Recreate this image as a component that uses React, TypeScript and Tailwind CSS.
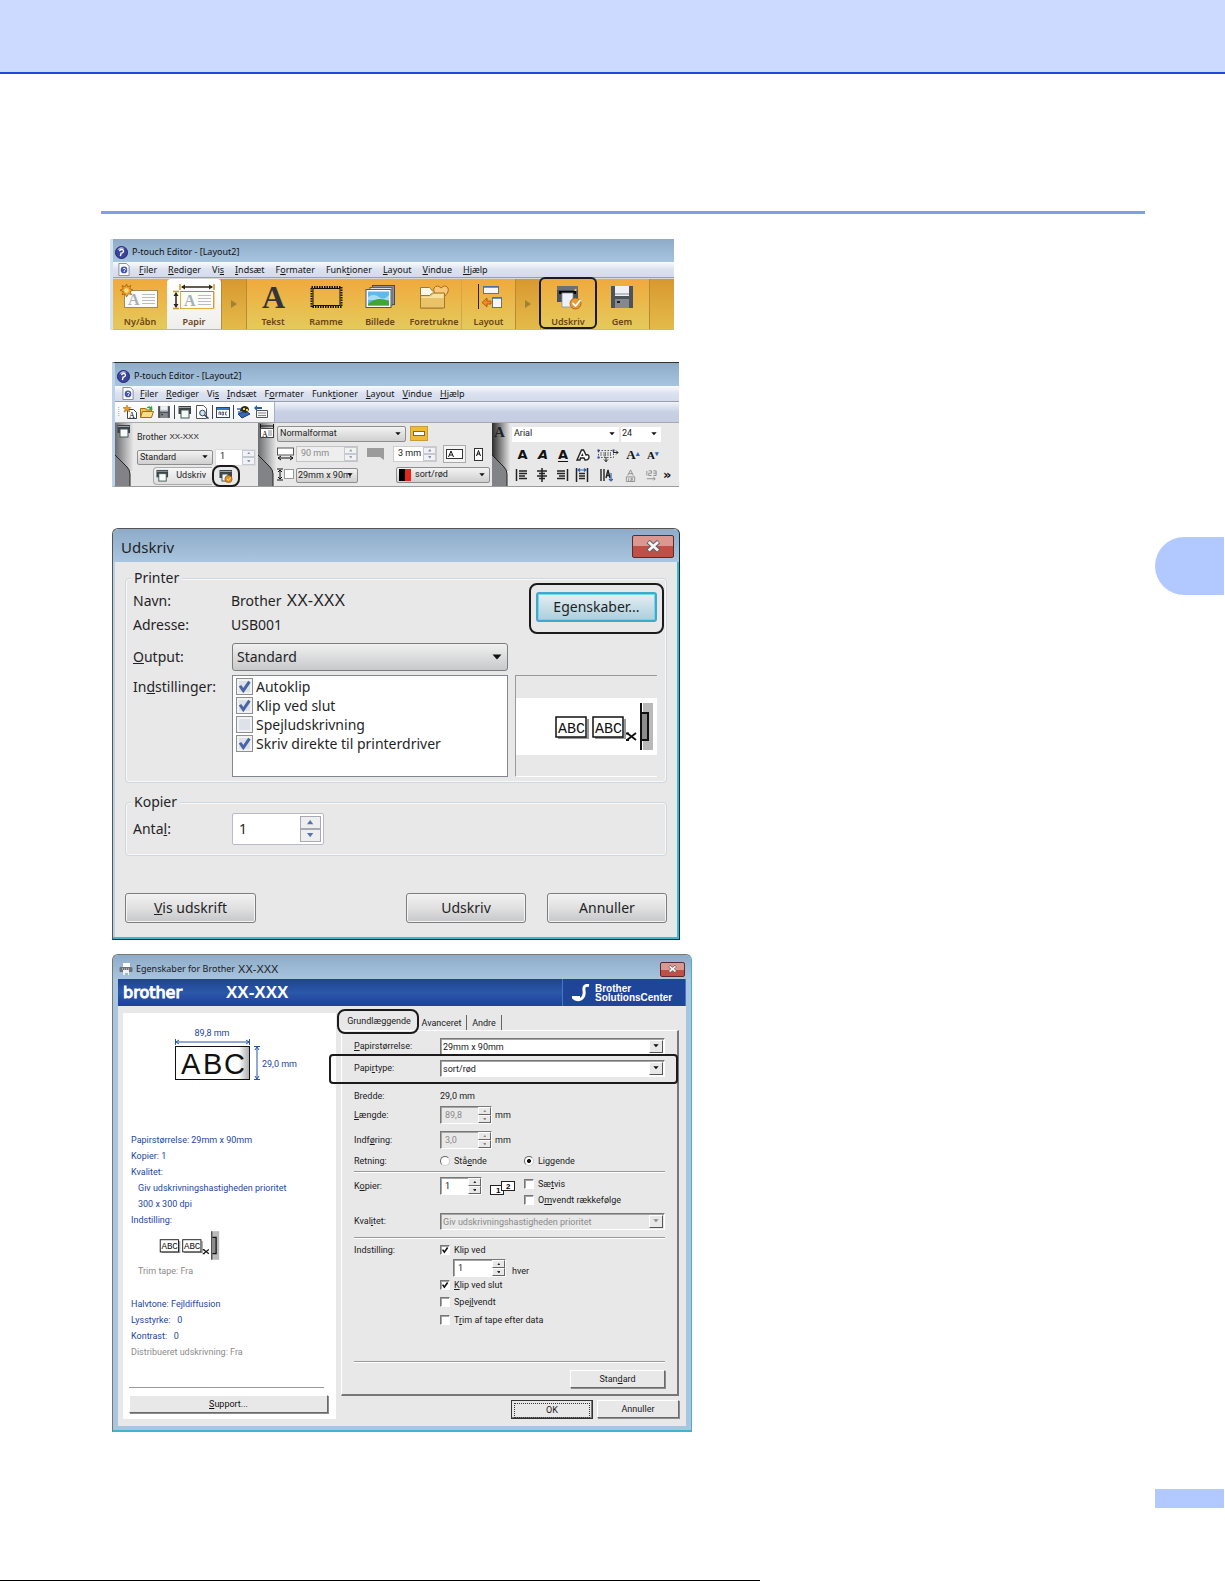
import React, { useState } from 'react';
import clsx from 'clsx';

const ui = "font-['Noto_Sans','Open_Sans',sans-serif]";
const narrow = "font-['Roboto','Noto_Sans',sans-serif]";

// "&Filer" -> F underlined, the rest plain
const Accel = ({ text }: { text: string }) => {
  const i = text.indexOf('&');
  if (i < 0) return <>{text}</>;
  return (
    <>
      {text.slice(0, i)}
      <u className="underline-offset-1">{text[i + 1]}</u>
      {text.slice(i + 2)}
    </>
  );
};

const Callout = ({ className }: { className: string }) => (
  <span className={clsx('absolute pointer-events-none border-2 border-[#1c1a1d]', className)} />
);

/* ---------- form controls ---------- */

interface SelectProps {
  label: string;
  options: string[];
  className: string;
  arrow?: string;
  disabled?: boolean;
  children?: React.ReactNode;
  pad?: string;
}

const Select = ({ label, options, className, arrow, disabled, children, pad = 'pl-1' }: SelectProps) => (
  <span className={clsx('relative flex items-center', className)}>
    {children}
    <select
      aria-label={label}
      disabled={disabled}
      className={clsx('appearance-none w-full h-full bg-transparent outline-none truncate', pad, disabled && 'text-[#8a8a8a]')}
    >
      {options.map((o) => (
        <option key={o}>{o}</option>
      ))}
    </select>
    <span className={clsx('absolute pointer-events-none flex items-center justify-center', arrow || 'right-1 inset-y-0 w-[6px]')}>
      <svg viewBox="0 0 10 6" className="w-full max-w-[10px] min-w-[6px]">
        <path d="M0.5 0.5h9L5 5.5z" fill={disabled ? '#8a8a8a' : '#111'} />
      </svg>
    </span>
  </span>
);

interface SpinnerProps {
  label: string;
  initial: string;
  className: string;
  btn: string;
  disabled?: boolean;
  color?: string;
}

const Spinner = ({ label, initial, className, btn, disabled, color = '#222' }: SpinnerProps) => {
  const [value, setValue] = useState(initial);
  const step = (d: number) => setValue((v) => (/^\d+$/.test(v) ? String(Math.max(1, Number(v) + d)) : v));
  return (
    <span className={clsx('flex', className)}>
      <input
        aria-label={label}
        value={value}
        disabled={disabled}
        onChange={(e) => setValue(e.target.value)}
        className={clsx('flex-1 min-w-0 bg-transparent outline-none pl-1', disabled && 'text-[#8a8a8a]')}
      />
      <span className="flex flex-col">
        <button aria-label={`${label} op`} disabled={disabled} onClick={() => step(1)} className={clsx('flex-1 flex items-center justify-center', btn)}>
          <svg viewBox="0 0 6 4" className="w-1/3"><path d="M0 4h6L3 0z" fill={color} /></svg>
        </button>
        <button aria-label={`${label} ned`} disabled={disabled} onClick={() => step(-1)} className={clsx('flex-1 flex items-center justify-center', btn)}>
          <svg viewBox="0 0 6 4" className="w-1/3"><path d="M0 0h6L3 4z" fill={color} /></svg>
        </button>
      </span>
    </span>
  );
};

const Check = ({ text, on, className, box, mark }: { text: string; on?: boolean; className?: string; box: string; mark: string }) => (
  <label className={clsx('flex items-center', className)}>
    <span className={clsx('relative flex shrink-0', box)}>
      <input type="checkbox" defaultChecked={on} className="peer appearance-none absolute inset-0" />
      <svg viewBox="0 0 10 10" className="hidden peer-checked:block w-full h-full pointer-events-none relative">
        <path d="M2 4.5l2.2 3.2L8.3 1.8" fill="none" stroke={mark} strokeWidth="2" />
      </svg>
    </span>
    <span><Accel text={text} /></span>
  </label>
);

/* ---------- icons ---------- */

const AppIcon = ({ className = 'w-[13px] h-[13px]' }) => (
  <svg viewBox="0 0 14 14" className={className}>
    <circle cx="7" cy="7" r="6.5" fill="#3a449c" stroke="#1d2466" />
    <path d="M2.5 4.5A5 5 0 0 1 10.5 2.6Q7 2.4 2.5 4.5z" fill="#a9b4ea" />
    <path d="M4.8 5.5Q5.5 3.5 7.8 3.8Q10 4.6 8.6 6.7Q7.5 7.8 6.6 7.6L5.8 11" fill="none" stroke="#fff" strokeWidth="1.5" />
  </svg>
);

const DocIcon = () => (
  <svg viewBox="0 0 12 14" className="w-3 h-[13px] -mr-[2px]">
    <path d="M0.5 0.5h8l3 3v10h-11z" fill="#fdfdfd" stroke="#7d8596" />
    <circle cx="6" cy="7.5" r="3.6" fill="#4455b0" />
    <path d="M4.8 6.5q1-1.5 2.4-.5t-.6 2l-.6 1.7" fill="none" stroke="#fff" />
  </svg>
);

const Card = ({ x, y }: { x: number; y: number }) => (
  <g transform={`translate(${x} ${y})`}>
    <rect x="0.5" y="0.5" width="33" height="17" fill="#fbfbf8" stroke="#a28b56" />
    <path d="M18 4.5h13M18 7.5h13M18 10.5h13M18 13.5h13" stroke="#b9bcc4" />
    <text x="4" y="15" fontSize="16" fontWeight="bold" fontFamily="Liberation Serif" fill="#a9afb9">A</text>
  </g>
);

const NewIcon = () => (
  <svg viewBox="0 0 42 26" className="w-[42px] h-[26px]">
    <Card x={5} y={6} />
    <path d="M7.5 0l1.3 3 3-1.5-1 3.2 3.2 1.300-3 1.700 1.500 2.800-3.200-.7L7.500 13l-1.400-3.200-3.100.9 1.400-3L1 6.300l3.200-1.600L3 1.600l3.100 1.300z" fill="#f3a52c" stroke="#9f5f14" strokeWidth="0.8" />
    <circle cx="7.5" cy="6.5" r="2.3" fill="#ffdd7d" />
  </svg>
);

const PaperIcon = () => (
  <svg viewBox="0 0 42 26" className="w-[42px] h-[26px]">
    <Card x={7} y={7} />
    <path d="M7 0v6M41 0v6M0 7.5h6M0 24.5h6" stroke="#c99a24" strokeWidth="1.5" />
    <path d="M7.5 7.5v17M41 7.5v17h-33" fill="none" stroke="#e2b03a" />
    <path d="M9 3h30M3 9v14" stroke="#2f2713" strokeWidth="1.5" />
    <path d="M8 3l4-2.5v5zM40 3l-4-2.5v5zM3 8L.5 12h5zM3 24l-2.500-4h5z" fill="#2f2713" />
  </svg>
);

const TextIcon = () => (
  <svg viewBox="0 0 42 26" className="w-[42px] h-[26px] overflow-visible">
    <text x="10" y="24" fontSize="32" fontWeight="bold" fontFamily="Liberation Serif" fill="#34343c">A</text>
  </svg>
);

const FrameIcon = () => (
  <svg viewBox="0 0 42 26" className="w-[42px] h-[26px]">
    <rect x="6.5" y="3" width="30" height="20" fill="none" stroke="#17120a" strokeWidth="2" strokeDasharray="1.5 1" />
    <rect x="8" y="4.5" width="27" height="17" fill="none" stroke="#17120a" />
  </svg>
);

const PictureIcon = () => (
  <svg viewBox="0 0 42 26" className="w-[42px] h-[26px]">
    <rect x="13.5" y="1.5" width="22" height="19" fill="#8b9098" stroke="#464a52" />
    <rect x="11" y="3.5" width="22" height="18" fill="#d9dce0" stroke="#5d626b" />
    <rect x="7" y="5.5" width="25" height="18" fill="#fff" stroke="#556" />
    <rect x="9" y="7.5" width="21" height="14" fill="#63b8ea" />
    <path d="M9 13q6-4 11 0t10-2v5H9z" fill="#a6dcf5" />
    <path d="M9 20q9-8 21-3v4.5H9z" fill="#3fa535" />
  </svg>
);

const FavIcon = () => (
  <svg viewBox="0 0 42 26" className="w-[42px] h-[26px]">
    <path d="M7.5 24V3.5h9l3 3.500h10V24z" fill="#fdf8e8" stroke="#9a7a34" />
    <path d="M28 15q-9-6-7-11 3-4 7 0 4-4 7 0 2 5-7 11z" fill="#f7c879" stroke="#a86a1b" />
    <path d="M7.5 24V11.5h9l3-2.500h12V24z" fill="#eac368" stroke="#a07a28" />
    <path d="M8.5 12.5h9l3-2.500h10v4H8.500z" fill="#f6e1a0" />
  </svg>
);

const LayoutIcon = () => (
  <svg viewBox="0 0 42 26" className="w-[42px] h-[26px]">
    <path d="M10.5 0v25" stroke="#2b2415" />
    <rect x="15.5" y="2.5" width="15" height="7" fill="#f4f6f8" stroke="#6c7078" />
    <path d="M15.5 3h15" stroke="#3c74b8" strokeWidth="1.5" />
    <rect x="24.5" y="13.5" width="9" height="10" fill="#f4f6f8" stroke="#6c7078" />
    <path d="M24.5 14h9" stroke="#3c74b8" strokeWidth="1.5" />
    <path d="M14 18.5l5-4.500v3h4v3h-4v3z" fill="#f08a24" stroke="#a24e0e" strokeWidth="0.8" />
  </svg>
);

const PrintIcon = () => (
  <svg viewBox="0 0 42 26" className="w-[42px] h-[26px]">
    <rect x="10" y="2" width="21" height="16" fill="#4b4f57" />
    <rect x="10" y="2" width="21" height="4" fill="#6b7079" />
    <path d="M12 8.5h17" stroke="#050505" strokeWidth="3" />
    <rect x="27.5" y="5" width="2" height="2" fill="#f7c62c" />
    <rect x="15" y="9" width="11" height="14" fill="#edf2f8" stroke="#8b93a0" strokeWidth="0.8" />
    <circle cx="28.5" cy="19.5" r="5.5" fill="#e89a34" stroke="#9d5a11" strokeWidth="0.8" />
    <path d="M25.5 19l3 3 5-6" fill="none" stroke="#fff" strokeWidth="1.8" />
  </svg>
);

const SaveIcon = ({ className = 'w-[42px] h-[26px]', box = '0 0 42 26' }) => (
  <svg viewBox={box} className={className}>
    <path d="M10 2h22v22H10z" fill="#4e525b" />
    <rect x="14" y="2" width="14" height="10" fill="#eef0f3" />
    <path d="M14 10h14" stroke="#b8bdc6" strokeWidth="2" />
    <rect x="14" y="15" width="14" height="9" fill="#85898f" />
    <rect x="16" y="17" width="3" height="2" fill="#1d1f24" />
  </svg>
);

const SmallPrinter = ({ className = 'w-[14px] h-[14px]', gold = false }) => (
  <svg viewBox="0 0 14 14" className={className}>
    <rect x="0.5" y="1" width="12.5" height="8" fill="#3c4248" />
    <path d="M1 2.5h11.5" stroke="#9aa2a8" />
    {gold ? (
      <>
        <rect x="3" y="5" width="6" height="7" fill="#f7faf9" stroke="#41594f" />
        <circle cx="9.5" cy="10" r="3.6" fill="#e09028" stroke="#8a4d0c" strokeWidth="0.7" />
        <path d="M7.8 9.8l1.5 1.600 2.400-3" fill="none" stroke="#f7d9a8" />
      </>
    ) : (
      <rect x="3" y="5" width="8" height="8" fill="#f7faf9" stroke="#41594f" />
    )}
  </svg>
);

/* boxes of ABC labels leaving the cutter */
const TapeDrawing = ({ className }: { className: string }) => (
  <svg viewBox="0 0 100 51" className={className}>
    {[0, 37].map((x) => (
      <g key={x}>
        <path d={`M${x + 3} 37h30V18`} fill="none" stroke="#999" strokeWidth="2" />
        <rect x={x + 1} y="16" width="30" height="20" fill="#fff" stroke="#111" strokeWidth="1.5" />
        <text x={x + 3} y="32" fontSize="15" fontFamily="Liberation Mono" fill="#111">ABC</text>
      </g>
    ))}
    <path d="M72 32l9 7M72 39l9-7" stroke="#111" strokeWidth="1.8" />
    <path d="M71 32.5h3M71 39h3" stroke="#111" strokeWidth="2" />
    <rect x="88" y="2" width="10" height="47" fill="#b9b9b9" />
    <path d="M86 2v47" stroke="#111" strokeWidth="2" />
    <path d="M87 12h6v27h-6" fill="#8c8c8c" stroke="#111" strokeWidth="2" />
  </svg>
);

/* ---------- editor windows ---------- */

const menu = ['&Filer', '&Rediger', 'Vi&s', '&Indsæt', 'F&ormater', 'Funk&tioner', '&Layout', '&Vindue', '&Hjælp'];

const TitleBar = () => (
  <div className="h-[23px] flex items-center gap-1 pl-[2px] pt-[3px] bg-linear-to-b from-[#8eabc8] to-[#a7c4df] text-[#111]">
    <AppIcon />
    <span className="text-[9px] leading-4">P-touch Editor - [Layout2]</span>
  </div>
);

const MenuBar = ({ className }: { className: string }) => (
  <nav className={clsx('h-4 flex items-center text-[9px] leading-4 bg-linear-to-b from-[#fafbfd] via-[#dbe1ef] to-[#d3dbeb] border-b border-[#9a9fa8] text-[#151515]', className)}>
    <DocIcon />
    {menu.map((m) => (
      <a key={m} href="#" onClick={(e) => e.preventDefault()}><Accel text={m} /></a>
    ))}
  </nav>
);

const ToolButton = ({ icon, label, className }: { icon: React.ReactNode; label: string; className?: string }) => (
  <button className={clsx('relative flex flex-col items-center justify-between pt-[5px] h-full', className)}>
    {icon}
    <span className="text-[9px] leading-[15px] font-semibold text-[#6b4413]">{label}</span>
  </button>
);

const Arrow = () => (
  <span className="w-6 flex items-center justify-center">
    <svg viewBox="0 0 6 8" className="w-[6px] h-2"><path d="M0 0l6 4-6 4z" fill="#a08235" /></svg>
  </span>
);

const ExpressWindow = () => (
  <section className={clsx('ml-[110px] max-w-[564px] border-l-3 border-[#d5e3f0]', ui)}>
    <TitleBar />
    <MenuBar className="gap-[11px] pl-[5px]" />
    <div className="h-[52px] border-b border-[#b7b7b7] border-t border-t-[#d8d8d8] bg-linear-to-b from-[#d8982f] to-[#e3bb4a] flex">
      <div className="flex bg-linear-to-b from-[#f0a93c] to-[#e3ca5b] border-r border-[#b98a31]">
        <ToolButton icon={<NewIcon />} label="Ny/åbn" className="w-[54px]" />
        <ToolButton icon={<PaperIcon />} label="Papir" className="w-[54px] bg-linear-to-b from-white to-[#eeeeec] rounded-t-sm" />
      </div>
      <Arrow />
      <div className="flex bg-linear-to-b from-[#f0a93c] to-[#e3ca5b] border-x border-[#b98a31]">
        <ToolButton icon={<TextIcon />} label="Tekst" className="w-[52px]" />
        <ToolButton icon={<FrameIcon />} label="Ramme" className="w-[54px]" />
        <ToolButton icon={<PictureIcon />} label="Billede" className="w-[54px]" />
        <ToolButton icon={<FavIcon />} label="Foretrukne" className="w-[54px]" />
        <ToolButton icon={<LayoutIcon />} label="Layout" className="w-[54px] border-l border-[#d3a648]" />
      </div>
      <Arrow />
      <div className="flex bg-linear-to-b from-[#f0a93c] to-[#e3ca5b] border-x border-[#b98a31]">
        <span className="relative">
          <ToolButton icon={<PrintIcon />} label="Udskriv" className="w-[54px]" />
          <Callout className="-inset-x-[2px] -top-[2px] bottom-0 rounded-md" />
        </span>
        <ToolButton icon={<SaveIcon />} label="Gem" className="w-[54px]" />
      </div>
    </div>
  </section>
);

const SideTab = ({ children, from = '#6a6b6e' }: { children: React.ReactNode; from?: string }) => (
  <div className="relative w-[18px] shrink-0 h-full">
    <svg viewBox="0 0 18 63" className="absolute inset-0 w-full h-full" preserveAspectRatio="none">
      <defs>
        <linearGradient id={`tab${from.slice(1)}`} x1="0" x2="1">
          <stop offset="0" stopColor={from} />
          <stop offset="1" stopColor="#e4e4e4" />
        </linearGradient>
      </defs>
      <path d="M0 0h18v48h-3L0 33z" fill={`url(#tab${from.slice(1)})`} />
      <path d="M0 32l12 12q3 3 3 7v12H0z" fill="#828387" />
      <path d="M0 32l12 12q3 3 3 7v12" fill="none" stroke="#222" />
    </svg>
    <span className="relative flex items-start pt-px pl-[2px]">{children}</span>
  </div>
);

const winSelect = 'border border-[#8e8e8e] rounded-[2px] bg-linear-to-b from-[#f3f3f3] to-[#cfcfcf]';
const tinyBtn = 'w-[13px] border border-[#c5c9d3] bg-[#f2f2f2]';

const formatGlyphs = (
  <div className="flex items-center h-5 text-[#111] leading-5">
    <button className="w-[21px] font-['DejaVu_Sans'] font-bold text-[13px]">A</button>
    <button className="w-5 font-['DejaVu_Sans'] font-bold italic text-[13px]">A</button>
    <button className="w-5 font-['DejaVu_Sans'] font-semibold text-[13px] underline underline-offset-2">A</button>
    <button className="w-5 flex justify-center" aria-label="Kontur">
      <svg viewBox="0 0 14 14" className="w-[14px] h-[14px]">
        <path d="M1 12L5.500 2h2L10 7q3-1 3 2t-4 3l-1-2H4.500L4 12z" fill="#fff" stroke="#222" strokeWidth="1.4" />
        <path d="M5 8l1.5-3L7.500 8z" fill="#222" />
      </svg>
    </button>
    <button className="w-[30px] flex justify-center" aria-label="Tilpas tekst">
      <svg viewBox="0 0 22 16" className="w-[22px] h-4">
        <path d="M1.5 3.500h15v7h-15z" fill="none" stroke="#555" strokeDasharray="1.500 1.500" />
        <path d="M4 5v4M7 5v4h1.500V5M11 5v4M13.500 5v4" stroke="#777" fill="none" />
        <path d="M16 5.500h5M19 3.500l2 2-2 2M9 10v5M7 12.500l2 2 2-2" stroke="#222" fill="none" />
        <path d="M0.500 2.500h2v2h-2zM15.500 2.500h2v2h-2zM0.500 9.500h2v2h-2z" fill="#2b3a8c" />
      </svg>
    </button>
    <button className="w-[20px] font-['Liberation_Serif'] font-bold text-[13px]">A<sup className="text-[#2f62b5] text-[7px]">▴</sup></button>
    <button className="w-[20px] font-['Liberation_Serif'] font-bold text-[11px]">A<sup className="text-[#2f62b5] text-[7px]">▾</sup></button>
  </div>
);

// the vertical margin line and the text lines of each paragraph icon
const alignPaths = [
  'M1.5 1v12M4 3h8M4 5.500h8M4 8h6M4 10.500h8',
  'M7 0v14M2 3h10M4 5.500h6M2 8h10M4 10.500h6',
  'M12.5 1v12M2 3h8M2 5.500h8M4 8h6M2 10.500h8',
  'M1.5 0v14M12.500 0v14M4 5.500h6M4 8h6M4 10.500h6',
];

const alignGlyphs = (
  <div className="flex items-center h-5">
    {alignPaths.map((d, i) => (
      <button key={d} aria-label="Justering" className="w-5 flex justify-center">
        <svg viewBox="0 0 14 14" className="w-[14px] h-[14px]">
          <path d={d} stroke="#222" strokeWidth="1.5" />
          {i === 3 && <path d="M3 2h8M5 .5L3 2l2 1.500M9 .5L11 2 9 3.500" fill="none" stroke="#2f62b5" strokeWidth="1.2" />}
        </svg>
      </button>
    ))}
    <button aria-label="Lodret" className="w-[28px] flex justify-center">
      <svg viewBox="0 0 14 14" className="w-[14px] h-[14px]">
        <path d="M2 1v12M5 1v12M7 10L9 2l2 8M8 7.500h2" fill="none" stroke="#222" strokeWidth="1.4" />
        <path d="M12 5v8M10 11l2 2 2-2" fill="none" stroke="#2f62b5" strokeWidth="1.2" />
      </svg>
    </button>
    <button aria-label="Nummerering" className="w-[20px] flex justify-center">
      <svg viewBox="0 0 14 14" className="w-[13px] h-[13px]">
        <path d="M4 7l3-6 3 6M5 5h4M2.500 8.500h9v5h-9zM5 10v3M7 10h2v1.500H7.500V13H10" fill="none" stroke="#8c8c8c" />
      </svg>
    </button>
    <button aria-label="Tal" className="w-[22px] flex justify-center">
      <svg viewBox="0 0 14 14" className="w-[13px] h-[13px]">
        <path d="M2 2v5M4 2h3v2.500H4V7h3M9 2h3v5H9M9 4.500h3M2 10.500h9M9 9l2 1.500L9 12" fill="none" stroke="#8c8c8c" />
      </svg>
    </button>
    <button className="text-[13px] leading-4 font-['DejaVu_Sans'] font-bold text-[#111] pl-px">»</button>
  </div>
);

const ProWindow = () => (
  <section className={clsx('ml-[112px] max-w-[567px] border-t border-t-[#333] border-l-3 border-l-[#bcd3e8] border-b border-b-[#9c9c9c]', ui)}>
    <TitleBar />
    <MenuBar className="gap-2 pl-[7px]" />
    <div className="h-[20px] flex bg-linear-to-b from-[#f0f3f9] to-[#c4cde2] via-[#c8d0e4]">
      <div className="w-[160px] h-full bg-linear-to-b from-white to-[#f0f1f4] border-r border-[#a9afba] flex items-center pl-[3px] gap-[3px]">
        <svg viewBox="0 0 3 14" className="w-[2px] h-[14px]"><path d="M1 0v14" stroke="#aaa" strokeWidth="2" strokeDasharray="1 2" /></svg>
        <button aria-label="Ny"><svg viewBox="0 0 14 14" className="w-[14px] h-[14px] block">
          <path d="M4.5 4.500h6l3 3v6h-9z" fill="#fff" stroke="#444" />
          <text x="6" y="13" fontSize="8" fontFamily="Liberation Serif">A</text>
          <path d="M4 0l1 2.500h3L6 4.500 7 7 4 5.500 1 7l1-2.500L0 2.500h3z" fill="#e99a2c" stroke="#a2600e" strokeWidth="0.5" />
        </svg></button>
        <button aria-label="Åbn"><svg viewBox="0 0 14 14" className="w-[14px] h-[14px] block">
          <path d="M0.5 12.500v-9h5l1 1.500h5v7z" fill="#f2c14c" stroke="#a3701a" />
          <path d="M0.5 12.500l2-6h11l-2 6z" fill="#f9dc86" stroke="#a3701a" />
          <path d="M6 4q2-4 5-2l1-1.500.5 4.500-4-.5 1.300-1.200Q8 2.500 6 4z" fill="#37a13c" />
        </svg></button>
        <button aria-label="Gem"><SaveIcon box="8 0 26 26" className="w-[14px] h-[14px] block" /></button>
        <span className="w-px h-[14px] bg-[#444]" />
        <button aria-label="Udskriv"><SmallPrinter className="w-[14px] h-[14px] block" /></button>
        <button aria-label="Vis udskrift"><svg viewBox="0 0 14 14" className="w-[14px] h-[14px] block">
          <path d="M1.5 0.500h7l3 3v10h-10z" fill="#fff" stroke="#555" />
          <circle cx="7.5" cy="8" r="2.8" fill="#cfe6f7" stroke="#345" />
          <path d="M9.5 10l4 3.500" stroke="#345" strokeWidth="1.5" />
        </svg></button>
        <span className="w-px h-[14px] bg-[#444]" />
        <button aria-label="Egenskaber"><svg viewBox="0 0 14 14" className="w-[14px] h-[14px] block">
          <rect x="0.5" y="2.5" width="13" height="10" fill="#fff" stroke="#345" />
          <path d="M1 4h12" stroke="#3c78c8" strokeWidth="2" />
          <path d="M3 10V7h1.500v3M6 7v3h1.500V7zM11 7H9.500v3H11" fill="none" stroke="#444" strokeWidth="0.8" />
        </svg></button>
        <span className="w-px h-[14px] bg-[#444]" />
        <button aria-label="Database"><svg viewBox="0 0 14 14" className="w-[14px] h-[14px] block">
          <path d="M1 9l8-3 4 3-8 4z" fill="#3569b8" stroke="#183a74" />
          <path d="M3 6q0-4 4-5 5 0 5 4l-3 3z" fill="#2c2c20" />
          <path d="M6 3h2v2H6zM9 4h2v2H9z" fill="#f5d434" />
          <path d="M0 4h4M1 7h3" stroke="#3569b8" strokeWidth="1.5" />
        </svg></button>
        <button aria-label="Tape"><svg viewBox="0 0 14 14" className="w-[14px] h-[14px] block">
          <path d="M2.5 5.500h11v7h-11z" fill="#f4f4f4" stroke="#555" />
          <path d="M4 8h8M4 10.500h8" stroke="#888" />
          <path d="M0 3l3-3v2h5v2H3v2z" fill="#2c5aa8" />
        </svg></button>
      </div>
    </div>
    <div className={clsx('h-[64px] flex bg-[#e8e8e8] border-t border-[#a9a9a9] text-[9px] text-[#222]', narrow)}>
      <SideTab><SmallPrinter /></SideTab>
      <div className="w-[125px] shrink-0 pl-1 flex flex-col">
        <div className="h-[25px] pt-2 leading-3 flex gap-[3px]"><span>Brother</span><span className="font-['Liberation_Sans'] text-[8px]">XX-XXX</span></div>
        <div className="h-[18px] flex gap-[2px] items-center">
          <Select label="Printer output" options={['Standard']} className={clsx('w-[76px] h-[15px]', winSelect)} pad="pl-[2px]" />
          <Spinner label="Antal kopier" initial="1" className="w-[41px] h-[17px] bg-white border border-[#ddd]" btn={tinyBtn} color="#7f8fc0" />
        </div>
        <div className="h-[19px] pl-4 flex items-center">
          <button className="w-[59px] h-[18px] flex items-center justify-between pl-[2px] pr-[6px] border border-[#aaa] border-r-0 rounded-l bg-linear-to-b from-[#f6f6f6] to-[#dedede]">
            <SmallPrinter className="w-[13px] h-[13px]" />
            <span>Udskriv</span>
          </button>
          <button aria-label="Udskriftsindstillinger" className="relative w-[28px] h-[18px] flex items-center justify-center">
            <SmallPrinter gold />
            <Callout className="-inset-y-[2px] inset-x-0 rounded-lg" />
          </button>
        </div>
      </div>
      <SideTab>
        <svg viewBox="0 0 14 14" className="w-[14px] h-[14px]">
          <path d="M0.5 0v4M13.500 0v4M1 2h12" stroke="#111" />
          <rect x="0.5" y="4.5" width="13" height="9" fill="#fff" stroke="#444" />
          <path d="M8 7h4M8 9h4M8 11h4" stroke="#888" />
          <text x="2" y="12.5" fontSize="8" fontFamily="Liberation Serif">A</text>
        </svg>
      </SideTab>
      <div className="w-[216px] shrink-0 pl-px flex flex-col">
        <div className="h-[21px] flex items-center gap-1">
          <Select label="Papirformat" options={['Normalformat']} className={clsx('w-[129px] h-4', winSelect)} pad="pl-[2px]" />
          <button aria-label="Vis papir" className="w-[18px] h-[15px] bg-[#f2b934] border border-[#c79a3b] flex items-center justify-center">
            <span className="w-3 h-[5px] bg-white border border-[#7b6a3e]" />
          </button>
        </div>
        <div className="h-[20px] flex items-center">
          <svg viewBox="0 0 18 14" className="w-[18px] h-[14px]">
            <rect x="0.5" y="1" width="16" height="7" fill="#fff" stroke="#555" />
            <path d="M1 11h15M4 9l-3 2 3 2M13 9l3 2-3 2" fill="none" stroke="#111" />
          </svg>
          <Spinner label="Længde" initial="90 mm" disabled className="w-[62px] h-4 ml-px border border-[#c3c3c3] bg-[#eee]" btn={tinyBtn} color="#a5a5a5" />
          <svg viewBox="0 0 17 14" className="w-[17px] h-[14px] mx-[9px]"><path d="M0 1h17v12l-4-3H0z" fill="#9b9b9b" /></svg>
          <Spinner label="Margen" initial="3 mm" className="w-[44px] h-4 bg-white border border-[#ccc]" btn={tinyBtn} color="#7f8fc0" />
          <button aria-label="Liggende" className="ml-[6px] w-[23px] h-[18px] border border-[#aaa] bg-[#f4f4f4] flex items-center justify-center">
            <svg viewBox="0 0 17 10" className="w-[17px] h-[10px]">
              <rect x="0.5" y="0.5" width="16" height="9" fill="#fff" stroke="#333" />
              <path d="M2.5 8L5 2l2.500 6M3.500 6h3" fill="none" stroke="#111" />
            </svg>
          </button>
          <button aria-label="Stående" className="ml-2">
            <svg viewBox="0 0 9 13" className="w-[9px] h-[13px]">
              <rect x="0.5" y="0.5" width="8" height="12" fill="#fff" stroke="#333" />
              <path d="M2.5 8l2-5.500 2 5.500M3 6h3" fill="none" stroke="#111" />
            </svg>
          </button>
        </div>
        <div className="h-[22px] flex items-center">
          <svg viewBox="0 0 18 14" className="w-[18px] h-[14px]">
            <path d="M3 2v9M1 4l2-2 2 2M1 9l2 2 2-2M0 1h6M0 12h6" fill="none" stroke="#111" />
            <rect x="7.5" y="1.5" width="9" height="9" fill="#fff" stroke="#999" />
          </svg>
          <Select label="Bredde" options={['29mm x 90m']} className={clsx('ml-px w-[62px] h-[15px]', winSelect)} pad="pl-px" />
          <Select label="Papirtype" options={['sort/rød']} className={clsx('ml-[38px] w-[94px] h-4 shrink-0', winSelect)} pad="pl-1">
            <span className="w-3 h-3 ml-[2px] shrink-0 bg-linear-to-r from-black from-50% to-[#e8231c] to-50%" />
          </Select>
        </div>
      </div>
      <SideTab from="#2b2b2d"><span className="font-['Liberation_Serif'] font-bold text-[15px] leading-4">A</span></SideTab>
      <div className="min-w-0 flex-1 pl-[2px] flex flex-col">
        <div className="h-[22px] flex items-center gap-[2px]">
          <Select label="Skrifttype" options={['Arial']} className="w-[107px] h-[15px] bg-white" pad="pl-[2px]" />
          <Select label="Skriftstørrelse" options={['24']} className="w-[40px] h-[15px] bg-white" pad="pl-px" />
        </div>
        {formatGlyphs}
        {alignGlyphs}
      </div>
    </div>
  </section>
);

/* ---------- print dialog ---------- */

const bigBtn = 'h-[30px] border border-[#7d7d7d] rounded-[3px] bg-linear-to-b from-[#f2f2f2] from-0% via-[#e0e0e0] via-50% to-[#c6c7c9] shadow-[inset_0_0_0_1px_#f4f4f4]';

const CloseButton = ({ className }: { className: string }) => (
  <button aria-label="Luk" className={clsx('border border-[#5b2a30] rounded-[2px] bg-linear-to-b from-[#dc9890] from-50% to-[#c05046] to-50% flex items-center justify-center', className)}>
    <svg viewBox="0 0 14 12" className="h-[60%]">
      <path d="M2 1.5l10 9M12 1.500l-10 9" stroke="#5d5f6b" strokeWidth="4.5" />
      <path d="M2.5 2l9 8M11.500 2l-9 8" stroke="#f4f4f4" strokeWidth="2.6" />
    </svg>
  </button>
);

const PrintDialog = () => {
  const options = [
    { text: 'Autoklip', on: true },
    { text: 'Klip ved slut', on: true },
    { text: 'Spejludskrivning', on: false },
    { text: 'Skriv direkte til printerdriver', on: true },
  ];
  const group = 'absolute -top-[11px] left-[5px] px-[3px] bg-[#e8e8e8]';
  return (
    <section className={clsx('ml-[112px] max-w-[568px] h-[412px] rounded-t-md border border-[#555] border-b-[#10333a] border-r-[#10333a] bg-[#e8e8e8] shadow-[inset_-2px_-2px_0_#3fb4cd,inset_2px_0_0_#b9cfe4] text-[14px] leading-5 text-[#1f1f26]', ui)}>
      <header className="h-[33px] flex items-center justify-between pl-2 pr-[5px] pt-[2px] rounded-t-md bg-linear-to-b from-[#8eabc8] to-[#a9c5df] text-[15px]">
        <h2>Udskriv</h2>
        <CloseButton className="w-[42px] h-[23px]" />
      </header>
      <div className="px-3 pt-4">
        <fieldset className="relative h-[205px] border border-[#cdd8e1] rounded shadow-[inset_0_0_0_1px_#f8f8f8] pl-[7px] pt-3">
          <span className={group}>Printer</span>
          <div className="flex h-6"><span className="w-[98px]">Navn:</span><span className="flex gap-[5px]">Brother <span className="font-['Liberation_Sans'] text-[16px]">XX-XXX</span></span></div>
          <div className="flex h-6"><span className="w-[98px]">Adresse:</span><span>USB001</span></div>
          <div className="absolute top-[13px] right-[9px]">
            <button className="w-[121px] h-[30px] rounded-[3px] border-2 border-[#3fa9cc] bg-linear-to-b from-[#e6eef2] to-[#abcfdd] shadow-[inset_0_0_0_1px_#6fd8f0]">Egenskaber...</button>
            <Callout className="-inset-x-[7px] -top-[9px] -bottom-[12px] rounded-lg" />
          </div>
          <div className="flex items-center h-[30px] mt-[3px]">
            <span className="w-[99px]"><Accel text="&Output:" /></span>
            <Select label="Output" options={['Standard']} className="w-[276px] h-7 border border-[#7d7d7d] rounded-[3px] bg-linear-to-b from-[#f0f0f0] to-[#c8c9cb]" arrow="right-[5px] inset-y-0 w-[10px]" />
          </div>
          <div className="flex pt-[3px]">
            <span className="w-[99px] pt-[2px]"><Accel text="In&dstillinger:" /></span>
            <div className="w-[276px] h-[102px] bg-white border border-[#82868f] pt-px pl-[3px]">
              {options.map((o) => (
                <Check
                  key={o.text}
                  text={o.text}
                  on={o.on}
                  className="h-[19px] gap-[3px]"
                  box="w-[17px] h-[17px] border border-[#8f9092] bg-[#dde2ea] shadow-[inset_0_0_0_2px_#f2f2f2]"
                  mark="#4a64a8"
                />
              ))}
            </div>
            <div className="ml-[7px] w-[142px] h-[102px] border-t border-l border-t-[#999] border-l-[#999] border-b border-b-white pt-[22px]">
              <div className="h-[57px] bg-white flex items-center justify-end pr-[2px]">
                <TapeDrawing className="w-[100px] h-[51px]" />
              </div>
            </div>
          </div>
        </fieldset>
        <fieldset className="relative h-[54px] mt-[19px] border border-[#cdd8e1] rounded shadow-[inset_0_0_0_1px_#f8f8f8] pl-[7px] flex items-center">
          <span className={group}>Kopier</span>
          <span className="w-[99px]"><Accel text="Anta&l:" /></span>
          <Spinner
            label="Antal"
            initial="1"
            className="w-[92px] h-8 bg-white border border-[#b9bcc6] p-[2px] rounded-[2px]"
            btn="w-[21px] border border-[#a7aab3] bg-[#eeeeee]"
            color="#5870b4"
          />
        </fieldset>
        <div className="mt-[37px] flex">
          <button className={clsx('w-[131px]', bigBtn)}><Accel text="&Vis udskrift" /></button>
          <button className={clsx('w-[120px] ml-auto', bigBtn)}>Udskriv</button>
          <button className={clsx('w-[120px] ml-[21px]', bigBtn)}>Annuller</button>
        </div>
      </div>
    </section>
  );
};

/* ---------- driver properties ---------- */

const sunken = 'border border-t-[#777] border-l-[#777] border-b-white border-r-white shadow-[inset_1px_1px_0_#a5a5a5]';
const classicBtn = 'h-[18px] bg-[#e8e8e8] border border-t-white border-l-white border-b-[#6a6a6a] border-r-[#6a6a6a] shadow-[1px_1px_0_#8c8c8c]';
const classicArrow = 'right-px inset-y-px w-[14px] px-[3px] bg-[#e8e8e8] border border-t-white border-l-white border-b-[#555] border-r-[#555]';
const classicSpin = 'w-[13px] bg-[#e8e8e8] border border-t-white border-l-white border-b-[#666] border-r-[#666]';
const Rule = ({ className }: { className?: string }) => <div className={clsx('h-[2px] bg-[#999] border-b border-white', className)} />;
const ClassicCheck = ({ text, on, className }: { text: string; on?: boolean; className?: string }) => (
  <Check text={text} on={on} className={clsx('h-4 gap-1', className)} box={clsx('w-[10px] h-[10px] bg-white', sunken)} mark="#111" />
);

const Row = ({ label, className, children }: { label: string; className: string; children: React.ReactNode }) => (
  <div className={clsx('flex items-center', className)}>
    <span className="w-[86px] shrink-0"><Accel text={label} /></span>
    {children}
  </div>
);

const Radio = ({ text, on }: { text: string; on?: boolean }) => (
  <label className="flex items-center gap-1 w-[84px]">
    <input
      type="radio"
      name="retning"
      defaultChecked={on}
      className="appearance-none w-[10px] h-[10px] rounded-full bg-white border border-t-[#666] border-l-[#666] border-[#ccc] checked:bg-radial checked:from-[#111] checked:from-30% checked:to-white checked:to-40%"
    />
    <span><Accel text={text} /></span>
  </label>
);

const Summary = () => (
  <aside className="w-[213px] shrink-0 bg-white text-[#24479c] flex flex-col">
    <div className="h-[119px] pt-[14px] pl-[51px]">
      <div className="w-[76px] text-center leading-3">89,8 mm</div>
      <div className="flex items-end">
        <svg viewBox="0 2 88 42" className="w-[88px] h-[42px]">
          <path d="M1.5 2v6M75.500 2v6M2 5h73M5 3L2 5l3 2M72 3l3 2-3 2" fill="none" stroke="#2456a8" />
          <path d="M80 9.500h6M80 42.500h6M83 10v32M81 13l2-3 2 3M81 39l2 3 2-3" fill="none" stroke="#2456a8" />
          <defs>
            <linearGradient id="shade" x1="0" x2="1">
              <stop offset="0.85" stopColor="#fff" />
              <stop offset="1" stopColor="#aaa" />
            </linearGradient>
          </defs>
          <rect x="1.5" y="9.5" width="74" height="33" fill="url(#shade)" stroke="#111" />
          <text x="7" y="37" fontSize="29" fontFamily="Liberation Sans" fill="#111">A</text>
          <text x="29" y="37" fontSize="29" fontFamily="Liberation Sans" fill="#111">B</text>
          <text x="50" y="37" fontSize="29" fontFamily="Liberation Sans" fill="#111">C</text>
        </svg>
        <span className="pb-[11px] leading-3">29,0 mm</span>
      </div>
    </div>
    <div className="pl-2 leading-4">
      <p>Papirstørrelse: 29mm x 90mm</p>
      <p>Kopier: 1</p>
      <p>Kvalitet:</p>
      <p className="pl-[7px]">Giv udskrivningshastigheden prioritet</p>
      <p className="pl-[7px]">300 x 300 dpi</p>
      <p>Indstilling:</p>
      <div className="h-[35px] pl-7 pt-[2px]"><TapeDrawing className="w-[62px] h-[31px]" /></div>
      <p className="pl-[7px] text-[#8b8b8b]">Trim tape: Fra</p>
      <p className="mt-[17px]">Halvtone: Fejldiffusion</p>
      <p>Lysstyrke:&nbsp;&nbsp; 0</p>
      <p>Kontrast:&nbsp;&nbsp; 0</p>
      <p className="text-[#8b8b8b]">Distribueret udskrivning: Fra</p>
    </div>
    <div className="mt-auto mb-[6px] pl-[6px] pr-2 text-[#111]">
      <Rule className="mr-1 mb-[6px]" />
      <button className={clsx('w-full', classicBtn)}><Accel text="&Support..." /></button>
    </div>
  </aside>
);

const PropertiesDialog = () => (
  <section className={clsx('ml-[112px] max-w-[580px] h-[478px] rounded-t-md border border-[#777] border-b-2 border-b-[#43b2cd] border-r-[#43b2cd] bg-[#a9c5df] px-[5px] pb-[4px] flex flex-col text-[9px] leading-4 text-[#1b1b1b]', narrow)}>
    <header className="h-6 shrink-0 flex items-center pt-1 bg-linear-to-b from-[#8eabc8] to-[#a7c4df] -mx-[5px] px-[6px] rounded-t-md">
      <svg viewBox="0 0 14 14" className="w-[14px] h-[14px] mr-[3px]">
        <rect x="4" y="1" width="7" height="5" fill="#fff" />
        <rect x="0.5" y="5" width="13" height="5" rx="1" fill="#6e7378" />
        <path d="M3 7h8" stroke="#ddd" strokeDasharray="1 1" />
        <rect x="4" y="8" width="6" height="5" fill="#eef" />
        <path d="M6 12h3" stroke="#2c9c58" />
      </svg>
      <h2 className={clsx('flex gap-[3px]', ui)}>Egenskaber for Brother <span className="font-['Liberation_Sans'] text-[11px]">XX-XXX</span></h2>
      <CloseButton className="ml-auto w-[25px] h-[15px]" />
    </header>
    <div className="h-[27px] shrink-0 flex items-center pl-[5px] bg-linear-to-b from-[#1f4391] via-[#2b58a8] to-[#1f3f9b] text-white">
      <span className="w-[103px] font-['DejaVu_Sans',sans-serif] text-[16px] [-webkit-text-stroke:1px_white]">brother</span>
      <span className="font-['Liberation_Sans'] font-bold text-[17px]">XX-XXX</span>
      <a href="#" className="ml-auto w-[124px] h-full pl-[9px] flex items-center gap-[5px] border-l border-[#4a74c4] border-r bg-[#1f4599]">
        <svg viewBox="0 0 18 18" className="w-[18px] h-[18px]">
          <path d="M17 1.5q-6-1-5 5t-3 8.500q-4.500 2-8-1.500h7" fill="none" stroke="#fff" strokeWidth="3" />
        </svg>
        <span className="font-['Liberation_Sans'] font-bold text-[10px] leading-[9px]">Brother<br />SolutionsCenter</span>
      </a>
    </div>
    <div className="flex-1 min-h-0 bg-[#e8e8e8] flex py-[7px] pl-[5px] pr-[7px]">
      <Summary />
      <div className="flex-1 min-w-0 ml-[5px] flex flex-col">
        <div className="h-[18px] flex items-end -mt-[1px]" role="tablist">
          <button role="tab" className="relative w-[76px] h-[18px]">
            Grundlæggende
            <Callout className="-left-1 right-[-2px] -top-[3px] -bottom-1 rounded-lg z-10" />
          </button>
          <button role="tab" className="w-[50px] h-[15px] border-r border-[#666]">Avanceret</button>
          <button role="tab" className="w-[35px] h-[15px] border-r border-[#666]">Andre</button>
        </div>
        <div className="h-[366px] border border-white border-b-[#777] border-b-2 border-r-2 border-r-[#777] pl-3 pr-3 pt-[4px]">
          <Row label="&Papirstørrelse:" className="h-[22px]">
            <Select label="Papirstørrelse" options={['29mm x 90mm']} className={clsx('w-full h-[17px] bg-white', sunken)} arrow={classicArrow} pad="pl-[2px]" />
          </Row>
          <div className="relative">
            <Row label="Papi&rtype:" className="h-[22px]">
              <Select label="Papirtype" options={['sort/rød']} className={clsx('w-full h-[17px] bg-white', sunken)} arrow={classicArrow} pad="pl-[2px]" />
            </Row>
            <Callout className="-left-[25px] -right-[13px] -top-[3px] -bottom-[5px] rounded-[4px]" />
          </div>
          <Row label="Bredde:" className="h-[19px] mt-[7px]">29,0 mm</Row>
          <Row label="&Længde:" className="h-[20px]">
            <Spinner label="Længde i mm" initial="89,8" disabled className={clsx('w-[52px] h-[18px]', sunken)} btn={classicSpin} color="#8a8a8a" />
            <span className="ml-[3px]">mm</span>
          </Row>
          <Row label="Indf&øring:" className="h-[20px] mt-[5px]">
            <Spinner label="Indføring i mm" initial="3,0" disabled className={clsx('w-[52px] h-[18px]', sunken)} btn={classicSpin} color="#8a8a8a" />
            <span className="ml-[3px]">mm</span>
          </Row>
          <Row label="Retning:" className="h-[21px]">
            <Radio text="Stå&ende" />
            <Radio text="Li&ggende" on />
          </Row>
          <Rule />
          <div className="flex h-[38px] pt-[3px]">
            <Row label="K&opier:" className="h-5">
              <Spinner label="Kopier" initial="1" className={clsx('w-[42px] h-[18px] bg-white', sunken)} btn={classicSpin} />
              <svg viewBox="0 0 26 16" className="w-[26px] h-4 ml-2 shrink-0 self-end">
                <rect x="0.5" y="5.5" width="13" height="9" fill="#fff" stroke="#222" />
                <rect x="11.5" y="1.5" width="13" height="9" fill="#fff" stroke="#222" />
                <text x="6" y="13" fontSize="8" fontWeight="bold" fontFamily="Liberation Sans">1</text>
                <text x="16" y="9" fontSize="8" fontWeight="bold" fontFamily="Liberation Sans">2</text>
              </svg>
            </Row>
            <div className="ml-2">
              <ClassicCheck text="Sæ&tvis" />
              <ClassicCheck text="O&mvendt rækkefølge" />
            </div>
          </div>
          <Row label="Kval&itet:" className="h-[20px]">
            <Select label="Kvalitet" options={['Giv udskrivningshastigheden prioritet']} disabled className={clsx('w-full h-[17px]', sunken)} arrow={classicArrow} pad="pl-[2px]" />
          </Row>
          <Rule className="mt-[6px]" />
          <div className="flex pt-[3px] h-[122px]">
            <span className="w-[86px]">Indstilling:</span>
            <div>
              <ClassicCheck text="Klip ved" on />
              <div className="flex items-end h-[19px] pl-[13px]">
                <Spinner label="Klip ved hver" initial="1" className={clsx('w-[53px] h-[18px] bg-white', sunken)} btn={classicSpin} />
                <span className="ml-[6px] -mb-[2px]">hver</span>
              </div>
              <ClassicCheck text="&Klip ved slut" on />
              <ClassicCheck text="Spej&lvendt" className="mt-px" />
              <ClassicCheck text="T&rim af tape efter data" className="mt-[2px]" />
            </div>
          </div>
          <Rule />
          <div className="flex justify-end pt-[7px]">
            <button className={clsx('w-[95px]', classicBtn)}><Accel text="Stan&dard" /></button>
          </div>
        </div>
        <div className="mt-auto flex justify-end gap-1">
          <button className="w-[82px] h-[19px] border border-[#333] p-[2px] shadow-[inset_-1px_-1px_0_#777]">
            <span className="block border border-dotted border-[#333] leading-[13px]">OK</span>
          </button>
          <button className={clsx('w-[82px]', classicBtn)}>Annuller</button>
        </div>
      </div>
    </div>
  </section>
);

export default function App() {
  return (
    <div className="min-h-screen bg-white flex flex-col">
      <header className="h-[74px] shrink-0 bg-[#ccdaff] border-b-2 border-[#1a4ad8]" />
      <div className="flex flex-1">
        <main className="flex-1 min-w-0 flex flex-col">
          <hr className="mt-[137px] ml-[101px] mr-[10px] border-0 h-[3px] bg-[#7f9fee]" />
          <div className="mt-[25px]"><ExpressWindow /></div>
          <div className="mt-8"><ProWindow /></div>
          <div className="mt-[41px]"><PrintDialog /></div>
          <div className="mt-[14px]"><PropertiesDialog /></div>
        </main>
        <aside className="w-[70px] shrink-0 flex flex-col">
          <div className="mt-[463px] mr-px h-[58px] rounded-l-full bg-[#b2c9ff]" />
          <div className="mt-auto mb-[72px] mr-px h-[19px] bg-[#b2c9ff]" />
        </aside>
      </div>
      <footer className="h-px w-[62%] bg-black" />
    </div>
  );
}
